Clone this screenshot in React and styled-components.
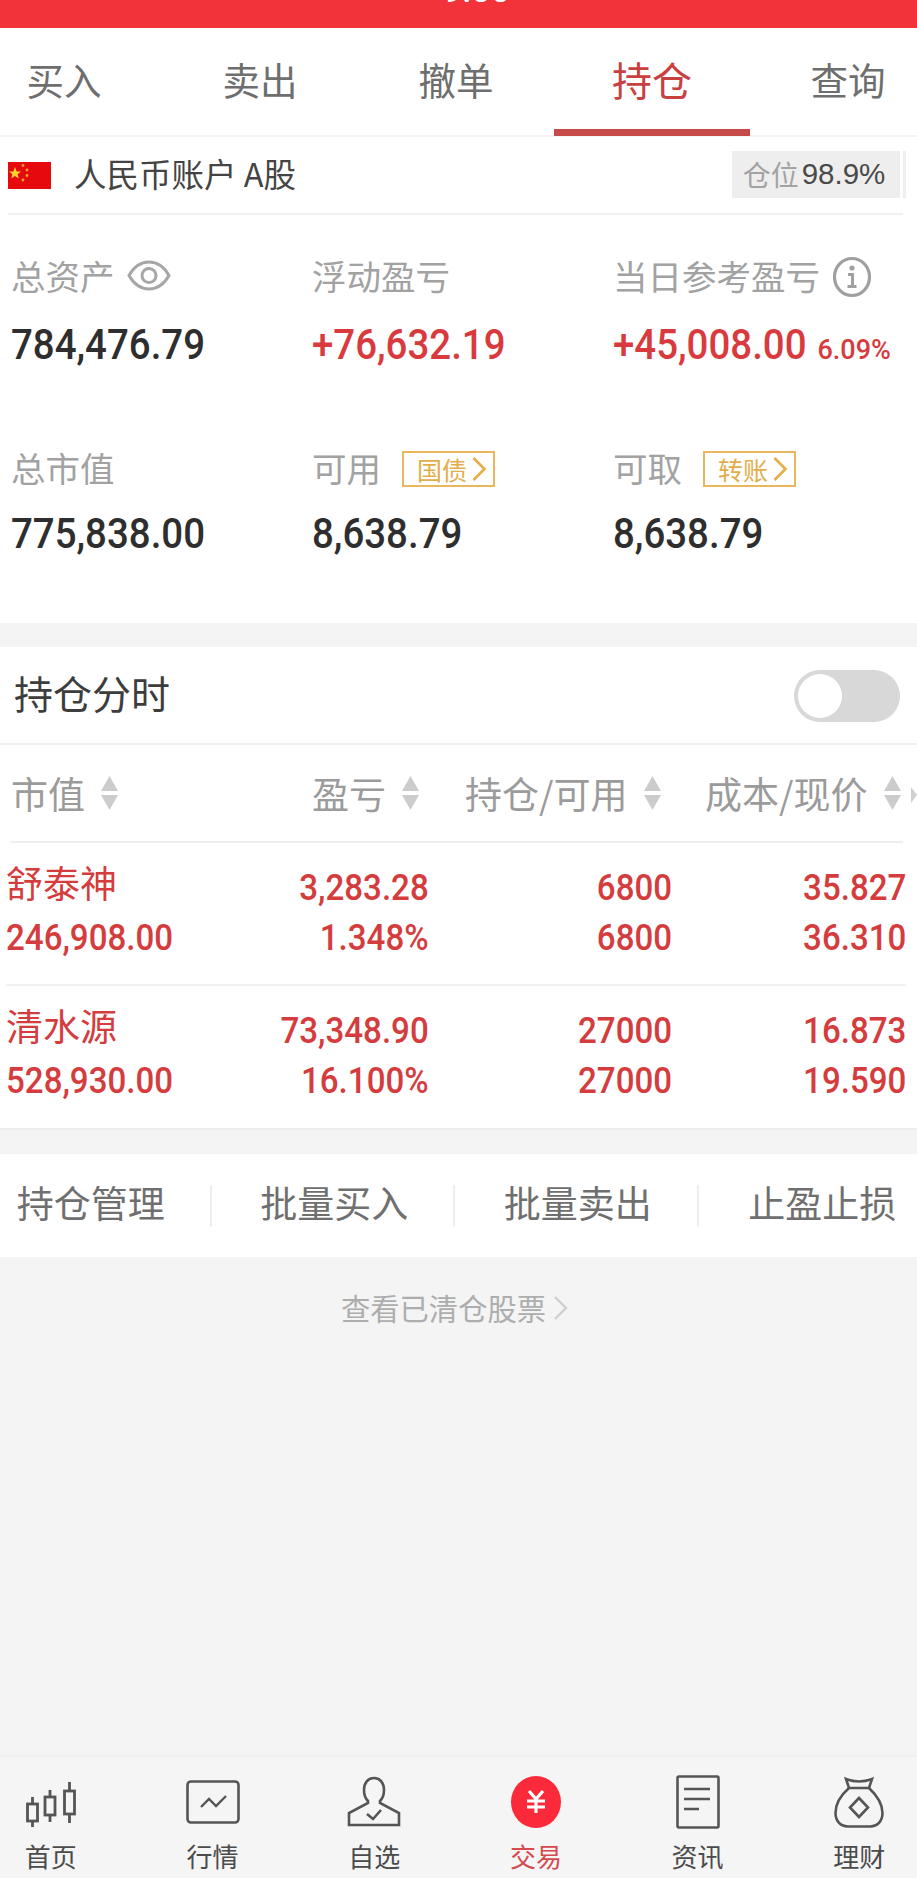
import React from "react";
import styled, { createGlobalStyle } from "styled-components";

const CJK = `"Noto Sans CJK SC", "Noto Sans", sans-serif`;
const NUM = `Roboto, "Liberation Sans", sans-serif`;
const RED = "#d43c3e";

const Global = createGlobalStyle`
  html, body { margin: 0; padding: 0; background: #f4f4f4; }
  body { font-family: ${CJK}; }
  * { box-sizing: border-box; }
`;

const Page = styled.div`
  width: 917px; height: 1878px; overflow: hidden; display: flex; flex-direction: column; background: #f4f4f4;
`;
const StatusBar = styled.div`
  height: 28px; background: #f23339; overflow: hidden; display: flex; justify-content: center; flex: none; padding-left: 36px;
`;
const StatusTime = styled.span`
  font: 500 34px/34px ${NUM}; color: #fff; margin-top: -27px; height: 34px;
`;
const Tabs = styled.div`
  height: 109px; flex: none; display: flex; margin-left: -34px; width: 981px; background: #fff;
  border-bottom: 2px solid #f3f3f3; box-shadow: 34px 0 0 #fff;
`;
const Tab = styled.div`
  flex: 0 0 196px; height: 108px; display: flex; align-items: center; justify-content: center;
  font-size: ${p => (p.$active ? 40 : 37.5)}px; line-height: 52px; color: ${p => (p.$active ? "#c8403f" : "#6e6e6e")};
  border-bottom: 7px solid ${p => (p.$active ? "#c64a48" : "transparent")};
`;
const Summary = styled.section`
  background: #fff; height: 486px; flex: none;
`;
const AccountRow = styled.div`
  height: 78px; margin: 0 14px 0 8px; border-bottom: 2px solid #f1f1f1; display: flex; align-items: center;
`;
const AccountName = styled.span`
  font-size: 32.5px; line-height: 40px; color: #444; margin: 0 0 5px 23px; flex: 1;
`;
const Position = styled.div`
  width: 171px; height: 47px; background: #eeeeee; display: flex; align-items: center; justify-content: center;
  gap: 3px; font-size: 28px; color: #a3a3a3; margin-top: -2px; border-right: 3px solid #fff; box-shadow: 3px 0 0 #eee; padding-right: 4px;
`;
const PositionValue = styled.span`
  font-family: "Liberation Sans", sans-serif; font-size: 29.5px; color: #4a4a4a;
`;
const StatGrid = styled.div`
  display: grid; grid-template-columns: 301px 301px 1fr; padding: 29px 0 0 11px;
`;
const Stat = styled.div`
  height: ${p => p.$h}px;
`;
const Label = styled.div`
  font-size: 34.5px; line-height: 62px; height: 62px; color: #a2a2a2; display: flex; align-items: center; gap: 12px; white-space: nowrap;
`;
const Value = styled.div`
  height: 54px; margin-top: ${p => p.$gap}px; white-space: nowrap; display: flex; align-items: baseline;
  color: ${p => (p.$red ? "#d83a3e" : "#2e2e2e")};
`;
const Digits = styled.span`
  font-family: ${NUM}; font-weight: 500; font-size: 42px; line-height: 54px; display: inline-block;
  transform: scaleX(0.915); transform-origin: left center;
`;
const Percent = styled.span`
  font-family: ${NUM}; font-weight: 500; font-size: 27px; margin-left: -7px; color: #d83a3e;
`;
const Tag = styled.span`
  border: 2.5px solid #e9b85c; color: #e3ad4c; font-size: 25px; line-height: 30px; height: 36px; padding: 0 5px 0 13px;
  display: inline-flex; align-items: center; gap: 4px; margin: 3px 0 0 9px;
`;
const Band = styled.div`
  height: ${p => p.$h}px; flex: none; background: #f4f4f4;
`;
const ToggleRow = styled.div`
  height: 98px; flex: none; background: #fff; border-bottom: 2px solid #f1f1f1; padding: 0 17px 0 14px;
  display: flex; align-items: center; justify-content: space-between;
`;
const ToggleTitle = styled.span`
  font-size: 39px; color: #3d3d3d; line-height: 50px; margin-bottom: 7px;
`;
const Toggle = styled.div`
  width: 106px; height: 52px; border-radius: 26px; background: #d8d8d8; position: relative; margin-top: 2px;
  &::after { content: ""; position: absolute; left: 4px; top: 4px; width: 44px; height: 44px; border-radius: 50%; background: #fff; }
`;
const Table = styled.section`
  background: #fff; flex: none; border-bottom: 2px solid #ececec;
`;
const HeadRow = styled.div`
  height: 98px; margin: 0 14px 0 11px; border-bottom: 2px solid #eeeeee; position: relative;
  display: grid; grid-template-columns: 301px 153px 240px 1fr; align-items: center;
`;
const HeadCell = styled.div`
  font-size: 37px; line-height: 46px; color: #9b9b9b; display: flex; align-items: center; gap: 15px; white-space: nowrap;
`;
const ScrollHint = styled.i`
  position: absolute; right: -14px; top: 42px; border-left: 6px solid #cfcfcf; border-top: 8px solid transparent; border-bottom: 8px solid transparent;
`;
const Row = styled.div`
  height: ${p => p.$h}px; margin: 0 11px 0 6px; padding-bottom: 2px; display: grid; grid-template-columns: minmax(0, 1fr) 250px 243px 234px; align-content: center;
  border-bottom: ${p => (p.$line ? "2px solid #f0f0f0" : "0")};
`;
const Cell = styled.div`
  font-family: ${CJK}; font-size: 37px; line-height: 38px; height: 50px; color: ${RED};
  text-align: ${p => (p.$left ? "left" : "right")}; white-space: nowrap;
`;
const CellNum = styled.span`
  font-family: ${NUM}; font-weight: 500; font-size: 37px; line-height: 50px; display: inline-block;
  transform: scaleX(0.895); transform-origin: ${p => (p.$left ? "left" : "right")} center;
`;
const Actions = styled.div`
  height: 103px; flex: none; background: #fff; display: flex; align-items: center; margin-left: -32px; width: 975px; box-shadow: 32px 0 0 #fff;
`;
const Action = styled.div`
  flex: 0 0 243.5px; height: 42px; display: flex; align-items: center; justify-content: center; font-size: 37px; line-height: 42px; padding: 0 0 7px 4px; color: #6f6f6f;
  border-right: ${p => (p.$last ? "0" : "2px solid #eeeeee")};
`;
const Cleared = styled.div`
  flex: 1; padding: 30px 7px 0 0; display: flex; justify-content: center; gap: 6px; font-size: 29.3px; line-height: 40px; color: #adadad;
  & > svg { margin-top: 8px; }
`;
const Nav = styled.nav`
  height: 123px; flex: none; background: #f5f5f5; border-top: 2px solid #efefef; display: flex; margin-left: -30px; width: 980px; padding-top: 19px; box-shadow: 30px 0 0 #f5f5f5;
`;
const NavItem = styled.div`
  flex: 0 0 161.7px; display: flex; flex-direction: column; align-items: center; font-size: 26px; line-height: 34px;
  color: ${p => (p.$active ? "#d44a50" : "#4b4b4b")};
`;
const IconBox = styled.div`
  height: 52px; margin-bottom: 11px; display: flex; align-items: center; justify-content: center;
`;
const InfoWrap = styled.span`
  display: inline-flex; margin-top: 3px;
`;

const Flag = () => (
  <svg width="43" height="27" viewBox="0 0 43 27">
    <rect width="43" height="27" fill="#e60a0e" />
    <polygon fill="#fbd32f" points="7,5 8.6,9.4 13,9.6 9.6,12.3 10.8,16.5 7,14.1 3.2,16.5 4.4,12.3 1,9.6 5.4,9.4" />
    <g fill="#e8a628">
      <circle cx="15" cy="3.5" r="1.4" /><circle cx="19" cy="8" r="1.4" /><circle cx="19" cy="13.5" r="1.4" /><circle cx="15" cy="18" r="1.4" />
    </g>
  </svg>
);
const Eye = () => (
  <svg width="44" height="33" viewBox="0 0 44 33" fill="none" stroke="#a6a6a6" strokeWidth="3">
    <path d="M2 16.5C8 6 15 3 22 3s14 3 20 13.5C36 27 29 30 22 30S8 27 2 16.5Z" />
    <circle cx="22" cy="16.5" r="7" />
  </svg>
);
const Info = () => (
  <svg width="40" height="42" viewBox="0 0 40 42" fill="none" stroke="#a0a0a0">
    <ellipse cx="20" cy="21" rx="17.5" ry="18.5" strokeWidth="3.2" />
    <circle cx="20" cy="12" r="2.6" fill="#a0a0a0" stroke="none" />
    <path d="M16 18.5h4.5v11.5M15.5 30.5h9" strokeWidth="3" />
  </svg>
);
const TagArrow = () => (
  <svg width="17" height="26" viewBox="0 0 17 26" fill="none" stroke="#e6ad48" strokeWidth="2.6"><path d="M2.5 2l11 11-11 11" /></svg>
);
const Sort = () => (
  <svg width="19" height="34" viewBox="0 0 19 34" fill="#cccccc"><path d="M9.5 0 18 15H1Z" /><path d="M1 19h17L9.5 34Z" /></svg>
);
const Chevron = () => (
  <svg width="17" height="26" viewBox="0 0 17 26" fill="none" stroke="#cfcfcf" strokeWidth="2.4"><path d="M3 2l11 11L3 24" /></svg>
);
const Candles = () => (
  <svg width="50" height="52" viewBox="0 0 50 52" fill="none" stroke="#555" strokeWidth="2.8">
    <rect x="1.5" y="28" width="10" height="17" /><path d="M6.5 21v7M6.5 45v6" />
    <rect x="19" y="21" width="10" height="18" /><path d="M24 14v7M24 39v7" />
    <rect x="38.5" y="15" width="10" height="23" /><path d="M43.5 6v9M43.5 38v9" />
  </svg>
);
const ChartIcon = () => (
  <svg width="54" height="44" viewBox="0 0 54 44" fill="none" stroke="#555" strokeWidth="2.6">
    <rect x="1.5" y="1.5" width="51" height="41" rx="3.5" />
    <path d="M15 27l8-8 7 7 10-10" strokeWidth="2.4" />
  </svg>
);
const Person = () => (
  <svg width="54" height="52" viewBox="0 0 54 52" fill="none" stroke="#555" strokeWidth="2.6">
    <path d="M27 2c6 0 10 5 10 12 0 5-2 9-4 11v2l19 10v12H2V37l19-10v-2c-2-2-4-6-4-11 0-7 4-12 10-12Z" />
    <path d="M20 38l6 5 8-9" strokeWidth="2.6" />
  </svg>
);
const Coin = () => (
  <svg width="50" height="52" viewBox="0 0 50 52">
    <ellipse cx="25" cy="26" rx="25" ry="26" fill="#fa2a3a" />
    <path d="M18 15l7 8 7-8M16 25h18M16 31h18M25 23v14" fill="none" stroke="#fff" strokeWidth="3.2" />
  </svg>
);
const Doc = () => (
  <svg width="44" height="54" viewBox="0 0 44 54" fill="none" stroke="#555" strokeWidth="2.6">
    <rect x="1.5" y="1.5" width="41" height="51" rx="1.5" />
    <path d="M8 14h26M8 24h26M8 34h15" strokeWidth="2.6" />
  </svg>
);
const Bag = () => (
  <svg width="50" height="52" viewBox="0 0 50 52" fill="none" stroke="#555" strokeWidth="2.6">
    <path d="M12 3c8 3 18 3 26 0l-3 9H15Z" />
    <path d="M15 12C7 19 1.5 28 1.5 37c0 9 6 13.5 12 13.5h23c6 0 12-4.5 12-13.5 0-9-6-18-13.5-25" />
    <path d="M25 22l9 9.5-9 9.5-9-9.5Z" />
  </svg>
);

const tabs = ["买入", "卖出", "撤单", "持仓", "查询"];
const actions = ["持仓管理", "批量买入", "批量卖出", "止盈止损"];
const navs = [
  ["首页", <Candles />], ["行情", <ChartIcon />], ["自选", <Person />],
  ["交易", <Coin />, true], ["资讯", <Doc />], ["理财", <Bag />],
];
const holdings = [
  { name: "舒泰神", mv: "246,908.00", pl: "3,283.28", pct: "1.348%", qty: "6800", avail: "6800", cost: "35.827", price: "36.310", h: 143, line: true },
  { name: "清水源", mv: "528,930.00", pl: "73,348.90", pct: "16.100%", qty: "27000", avail: "27000", cost: "16.873", price: "19.590", h: 142 },
];

export default function App() {
  return (
    <Page>
      <Global />
      <StatusBar><StatusTime>9:00</StatusTime></StatusBar>
      <Tabs>
        {tabs.map((t, i) => <Tab key={t} $active={i === 3}>{t}</Tab>)}
      </Tabs>
      <Summary>
        <AccountRow>
          <Flag />
          <AccountName>人民币账户 A股</AccountName>
          <Position>仓位<PositionValue>98.9%</PositionValue></Position>
        </AccountRow>
        <StatGrid>
          <Stat $h={192}>
            <Label>总资产<Eye /></Label>
            <Value $gap={12}><Digits>784,476.79</Digits></Value>
          </Stat>
          <Stat $h={192}>
            <Label>浮动盈亏</Label>
            <Value $gap={12} $red><Digits>+76,632.19</Digits></Value>
          </Stat>
          <Stat $h={192}>
            <Label>当日参考盈亏<InfoWrap><Info /></InfoWrap></Label>
            <Value $gap={12} $red><Digits>+45,008.00</Digits><Percent>6.09%</Percent></Value>
          </Stat>
          <Stat $h={150}>
            <Label>总市值</Label>
            <Value $gap={9}><Digits>775,838.00</Digits></Value>
          </Stat>
          <Stat $h={150}>
            <Label>可用<Tag>国债<TagArrow /></Tag></Label>
            <Value $gap={9}><Digits>8,638.79</Digits></Value>
          </Stat>
          <Stat $h={150}>
            <Label>可取<Tag>转账<TagArrow /></Tag></Label>
            <Value $gap={9}><Digits>8,638.79</Digits></Value>
          </Stat>
        </StatGrid>
      </Summary>
      <Band $h={24} />
      <ToggleRow>
        <ToggleTitle>持仓分时</ToggleTitle>
        <Toggle />
      </ToggleRow>
      <Table>
        <HeadRow>
          <HeadCell>市值<Sort /></HeadCell>
          <HeadCell>盈亏<Sort /></HeadCell>
          <HeadCell>持仓/可用<Sort /></HeadCell>
          <HeadCell>成本/现价<Sort /></HeadCell>
          <ScrollHint />
        </HeadRow>
        {holdings.map(h => (
          <Row key={h.name} $h={h.h} $line={h.line}>
            <Cell $left>{h.name}</Cell>
            <Cell><CellNum>{h.pl}</CellNum></Cell>
            <Cell><CellNum>{h.qty}</CellNum></Cell>
            <Cell><CellNum>{h.cost}</CellNum></Cell>
            <Cell $left><CellNum $left>{h.mv}</CellNum></Cell>
            <Cell><CellNum>{h.pct}</CellNum></Cell>
            <Cell><CellNum>{h.avail}</CellNum></Cell>
            <Cell><CellNum>{h.price}</CellNum></Cell>
          </Row>
        ))}
      </Table>
      <Band $h={24} />
      <Actions>
        {actions.map((a, i) => <Action key={a} $last={i === 3}>{a}</Action>)}
      </Actions>
      <Cleared>查看已清仓股票<Chevron /></Cleared>
      <Nav>
        {navs.map(([label, icon, active]) => (
          <NavItem key={label} $active={active}>
            <IconBox>{icon}</IconBox>
            {label}
          </NavItem>
        ))}
      </Nav>
    </Page>
  );
}
